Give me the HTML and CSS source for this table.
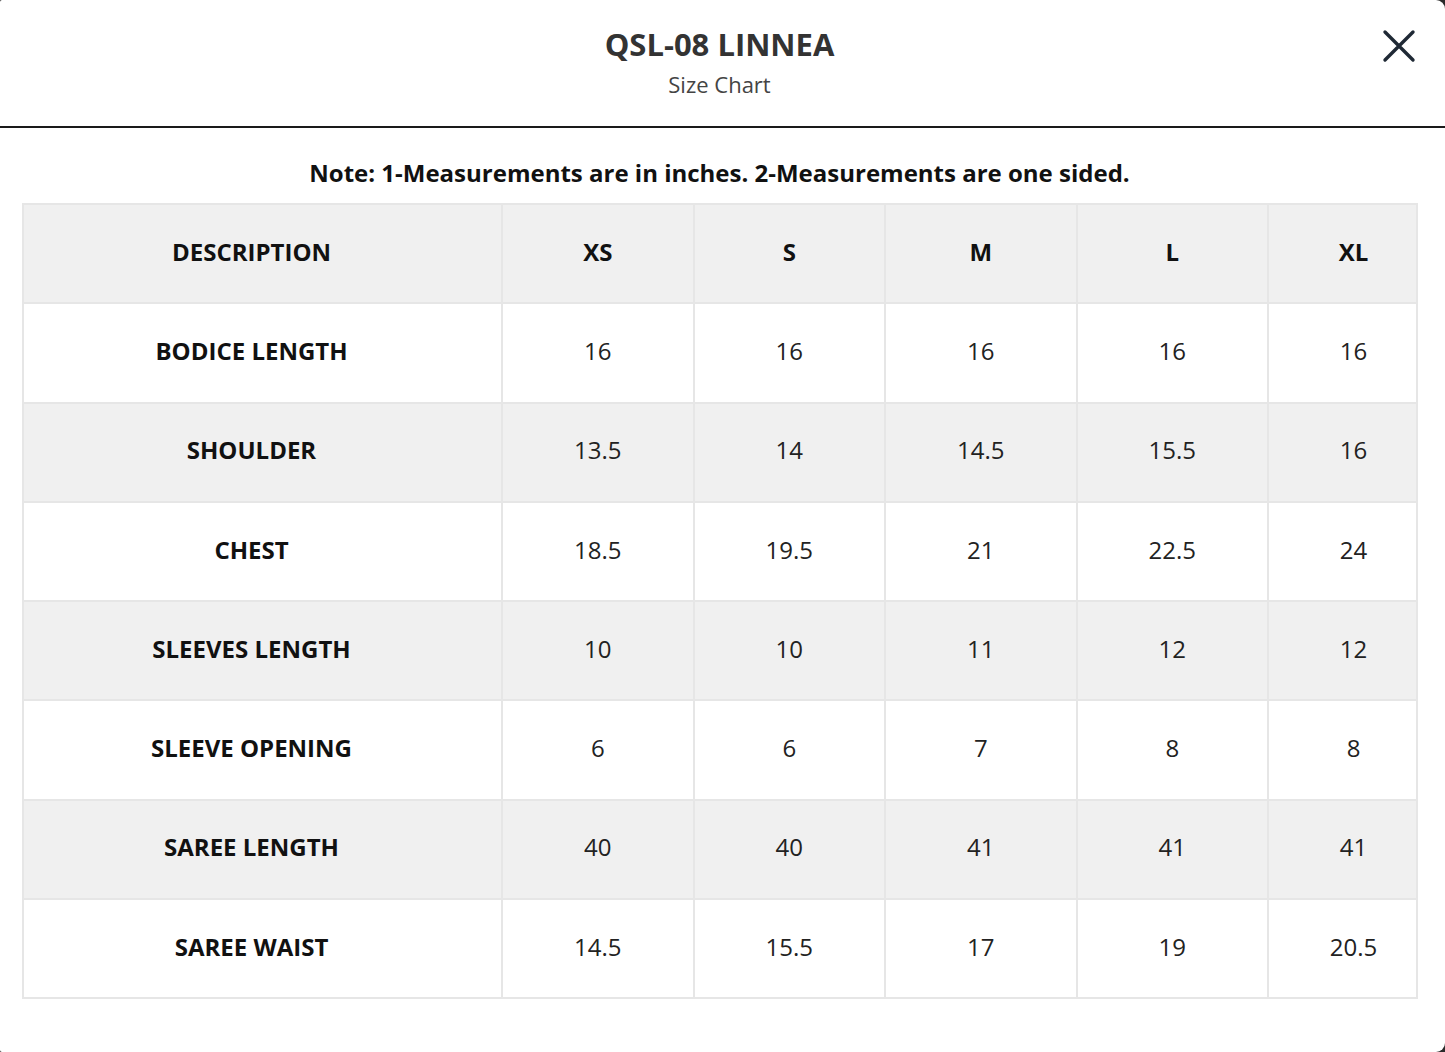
FILE: index.html
```html
<!DOCTYPE html>
<html lang="en">
<head>
<meta charset="utf-8">
<title>QSL-08 LINNEA Size Chart</title>
<link rel="stylesheet" href="styles.css">
</head>
<body>
<div class="modal">
  <header class="modal-header">
    <h1 class="title">QSL-08 LINNEA</h1>
    <p class="subtitle">Size Chart</p>
    <button class="close" aria-label="Close">
      <svg width="34" height="34" viewBox="0 0 34 34"><path d="M3 3 L31 31 M31 3 L3 31" stroke="#1f2935" stroke-width="3.4" stroke-linecap="round" fill="none"/></svg>
    </button>
  </header>
  <div class="modal-body">
    <p class="note">Note: 1-Measurements are in inches. 2-Measurements are one sided.</p>
    <table class="chart">
      <colgroup>
        <col class="c-desc"><col class="c-size"><col class="c-size"><col class="c-size"><col class="c-size"><col class="c-last">
      </colgroup>
      <thead>
        <tr><th>DESCRIPTION</th><th>XS</th><th>S</th><th>M</th><th>L</th><th>XL</th></tr>
      </thead>
      <tbody>
        <tr><th>BODICE LENGTH</th><td>16</td><td>16</td><td>16</td><td>16</td><td>16</td></tr>
        <tr><th>SHOULDER</th><td>13.5</td><td>14</td><td>14.5</td><td>15.5</td><td>16</td></tr>
        <tr><th>CHEST</th><td>18.5</td><td>19.5</td><td>21</td><td>22.5</td><td>24</td></tr>
        <tr><th>SLEEVES LENGTH</th><td>10</td><td>10</td><td>11</td><td>12</td><td>12</td></tr>
        <tr><th>SLEEVE OPENING</th><td>6</td><td>6</td><td>7</td><td>8</td><td>8</td></tr>
        <tr><th>SAREE LENGTH</th><td>40</td><td>40</td><td>41</td><td>41</td><td>41</td></tr>
        <tr><th>SAREE WAIST</th><td>14.5</td><td>15.5</td><td>17</td><td>19</td><td>20.5</td></tr>
      </tbody>
    </table>
  </div>
</div>
</body>
</html>
```

FILE: styles.css
```css
* { box-sizing: border-box; }
html, body { margin: 0; padding: 0; }
body {
  background: #2a2a2a;
  font-family: "Open Sans", "Noto Sans", sans-serif;
  height: 1052px;
  overflow: hidden;
}
.modal {
  background: #fff;
  width: 1445px;
  height: 1052px;
  border-radius: 2px 9px 9px 2px;
}
.modal-header {
  position: relative;
  height: 128px;
  border-bottom: 2px solid #1a1a1a;
  text-align: center;
  padding: 25px 6px 0 0;
}
.title {
  margin: 0;
  font-size: 31px;
  font-weight: 700;
  color: #333;
  line-height: 38px;
}
.subtitle {
  margin: 7px 0 0;
  font-size: 22px;
  color: #444;
  line-height: 28px;
}
.close {
  position: absolute;
  top: 29px;
  right: 29px;
  width: 34px;
  height: 34px;
  padding: 0;
  border: 0;
  background: none;
}
.close svg { display: block; }
.modal-body {
  padding: 29px 28px 0 22px;
}
.note {
  margin: 0 0 14px;
  text-align: center;
  font-size: 24px;
  font-weight: 700;
  color: #111;
  line-height: 32px;
}
.chart {
  width: 1395px;
  border-collapse: collapse;
  table-layout: fixed;
  border: 2px solid #e6e6e6;
}
.c-desc { width: 479px; }
.c-size { width: 191.5px; }
.c-last { width: 149px; }
.chart th, .chart td {
  border: 2px solid #e6e6e6;
  height: 99.3px;
  padding: 0 0 4px;
  text-align: center;
  vertical-align: middle;
  font-size: 24px;
  line-height: 30px;
  color: #111;
}
.chart tr > :first-child { padding-right: 22px; }
.chart tr > :last-child { padding-left: 22px; }
.chart th { font-weight: 700; }
.chart td { font-weight: 400; color: #222; }
.chart thead tr, .chart tbody tr:nth-child(even) { background: #f0f0f0; }
.chart tbody tr:nth-child(odd) { background: #fff; }
```
